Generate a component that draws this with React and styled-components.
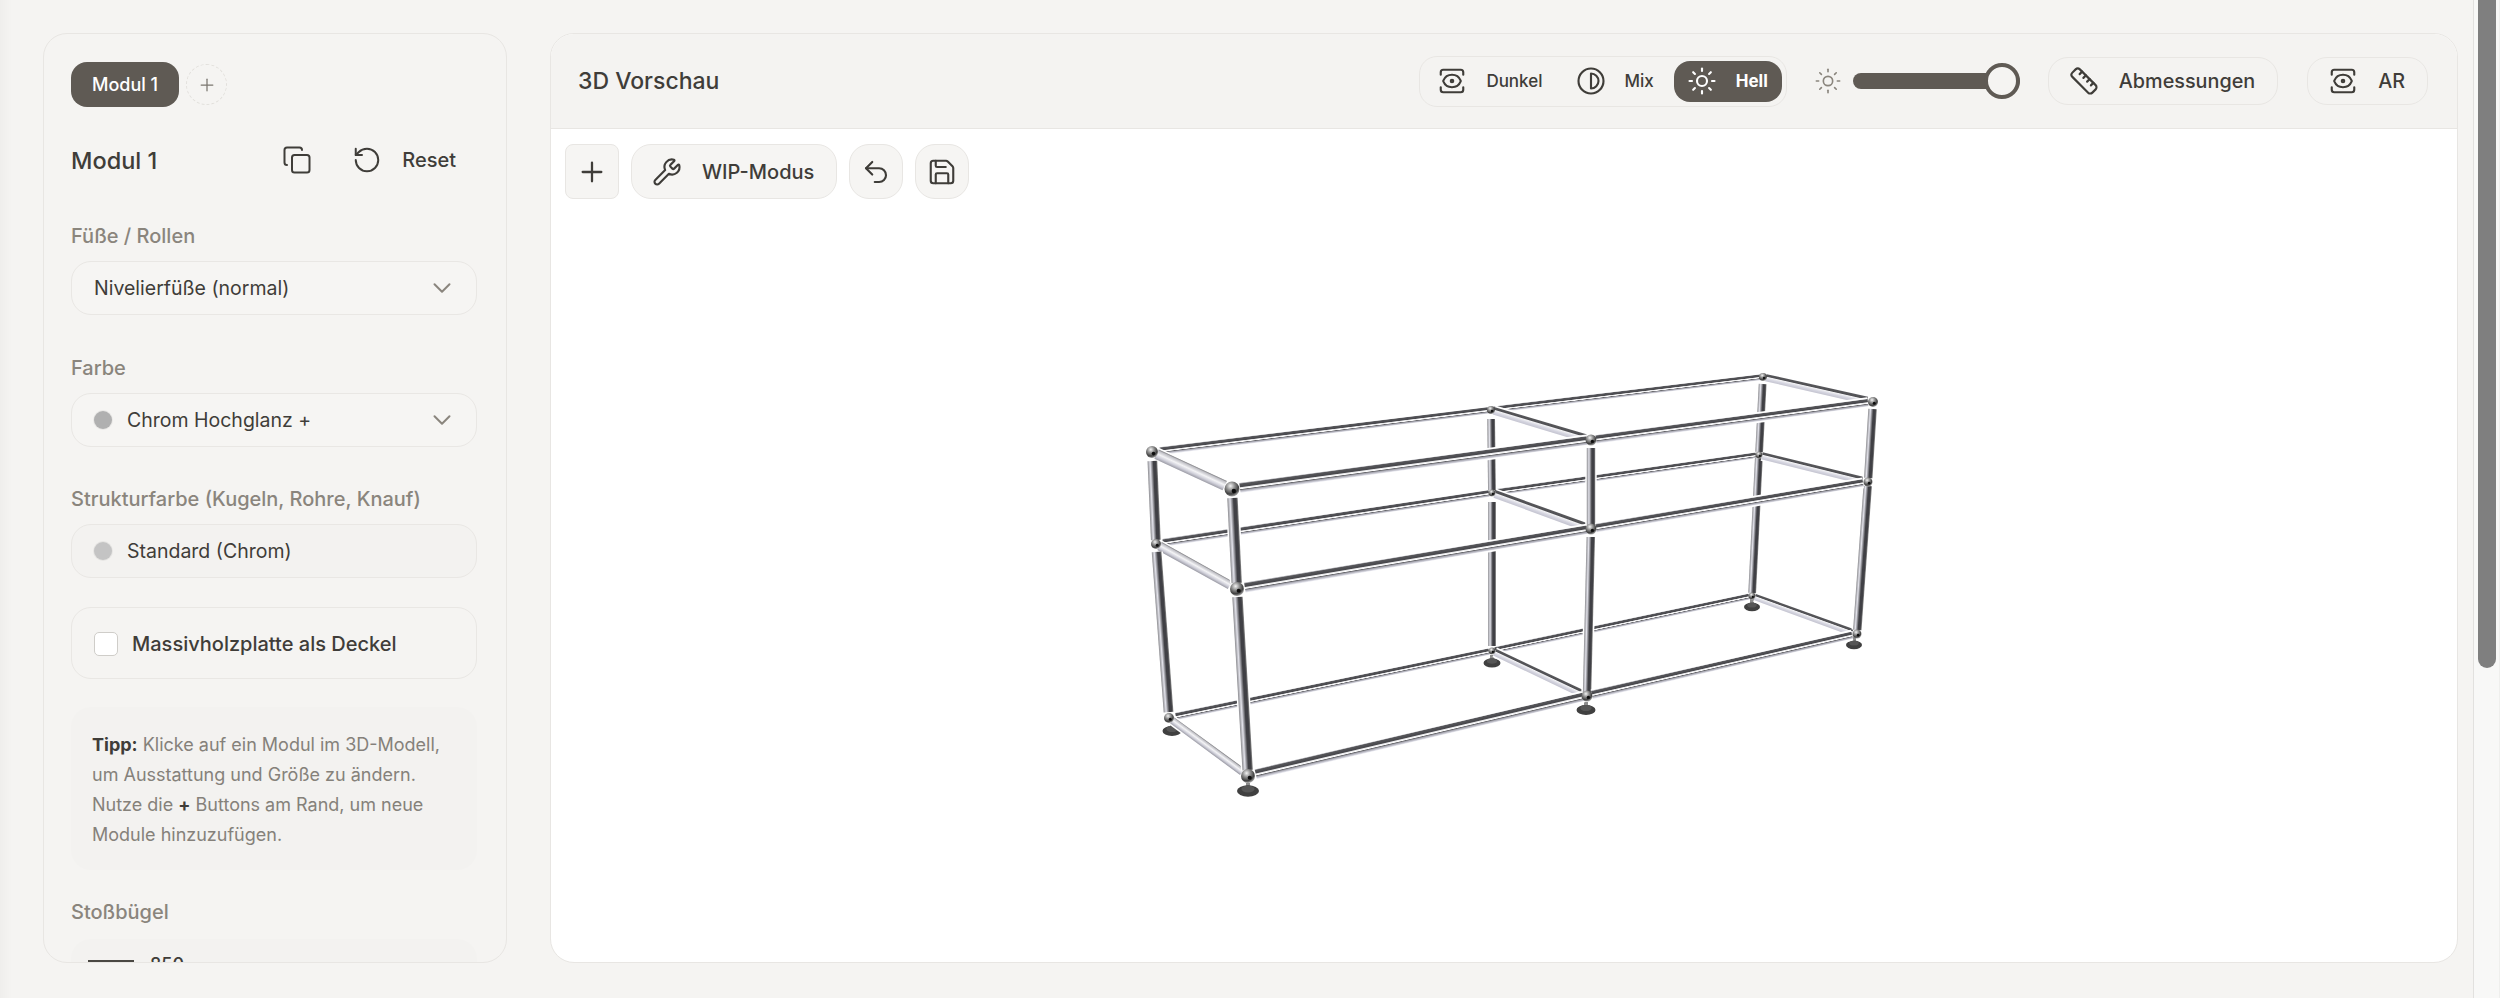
import React from 'react'
import styled, { createGlobalStyle } from 'styled-components'
import { Copy, RotateCcw, Plus, ChevronDown, Wrench, Undo2, Save, Sun, Ruler, View, Contrast } from 'lucide-react'

const GlobalStyle = createGlobalStyle`
  html, body {
    margin: 0;
    height: 100%;
    overflow: hidden;
    background: #f5f4f2;
  }
  body {
    font-family: Inter, "Liberation Sans", Arial, sans-serif;
    color: #3f3d39;
  }
`

const Page = styled.div`
  display: flex;
  height: 998px;
  background: linear-gradient(90deg, #efeeec, #f5f4f2 12px);
`

const Main = styled.main`
  flex: 1;
  display: flex;
  gap: 43px;
  padding: 33px 15px 35px 43px;
  min-width: 0;
`

const ScrollTrack = styled.div`
  width: 27px;
  box-sizing: border-box;
  padding: 0 3px 0 4px;
  background: #f8f8f7;
  border-left: 1px solid #e2e1df;
  border-right: 1px solid #efefed;
`

const ScrollThumb = styled.div`
  height: 668px;
  border-radius: 0 0 10px 10px;
  background: #7f7f7f;
`

const Sidebar = styled.aside`
  width: 464px;
  box-sizing: border-box;
  flex: none;
  padding: 28px 29px 0 27px;
  border: 1px solid #e8e6e3;
  border-radius: 24px;
  overflow: hidden;
  background: #f5f4f2;
`

const Tabs = styled.div`
  display: flex;
  align-items: center;
  gap: 7px;
`

const Tab = styled.div`
  width: 108px;
  height: 45px;
  display: flex;
  align-items: center;
  justify-content: center;
  border-radius: 16px;
  background: #5f5a54;
  color: #fff;
  font-size: 18px;
  font-weight: 500;
`

const AddTab = styled.div`
  width: 41px;
  height: 41px;
  box-sizing: border-box;
  display: flex;
  align-items: center;
  justify-content: center;
  border: 1px dashed #e2e0dc;
  border-radius: 50%;
  color: #7a766f;
`

const TitleRow = styled.div`
  display: flex;
  align-items: center;
  height: 40px;
  margin: 33px 0 44px;
`

const ModuleName = styled.h2`
  flex: 1;
  margin: 0;
  font-size: 23.5px;
  font-weight: 500;
`

const GhostAction = styled.div`
  display: flex;
  align-items: center;
  gap: 20px;
  margin-right: ${props => props.$end || 0}px;
  font-size: 20px;
  font-weight: 500;
`

const Field = styled.section`
  margin-bottom: ${props => props.$after}px;
`

const Label = styled.div`
  height: 24px;
  line-height: 24px;
  margin-bottom: 13px;
  color: #8a857d;
  font-size: 20px;
  font-weight: 500;
  white-space: nowrap;
`

const Select = styled.div`
  height: 54px;
  box-sizing: border-box;
  display: flex;
  align-items: center;
  gap: 15px;
  padding: 0 19px 0 22px;
  border: 1.5px solid #e9e7e4;
  border-radius: 20px;
  background: ${props => (props.$disabled ? '#f3f2f0' : '#f6f5f3')};
  font-size: 19.5px;
`

const SelectText = styled.span`
  flex: 1;
`

const Swatch = styled.span`
  width: 18px;
  height: 18px;
  border-radius: 50%;
  background: ${props => props.$color};
  box-shadow: 0 0 0 1px rgba(0, 0, 0, 0.05);
`

const CheckCard = styled.label`
  height: 72px;
  box-sizing: border-box;
  display: flex;
  align-items: center;
  gap: 14px;
  margin-bottom: 28px;
  padding: 1px 22px 0;
  border: 1.5px solid #e9e7e4;
  border-radius: 20px;
  font-size: 20px;
  font-weight: 500;
`

const CheckBox = styled.span`
  width: 24px;
  height: 24px;
  box-sizing: border-box;
  border: 1.5px solid #cfcdc9;
  border-radius: 5px;
  background: #fff;
`

const TipBox = styled.div`
  height: 163px;
  box-sizing: border-box;
  margin-bottom: 30px;
  padding: 23px 21px;
  border-radius: 20px;
  background: #f3f2f0;
  color: #85817a;
  font-size: 18px;
  line-height: 30px;
  white-space: nowrap;

  strong {
    color: #3f3d39;
    font-weight: 700;
  }
`

const BumperLabel = styled(Label)`
  margin-bottom: 15px;
`

const BumperCard = styled.div`
  height: 60px;
  display: flex;
  align-items: flex-start;
  padding: 15px 17px;
  box-sizing: border-box;
  border-radius: 20px;
  background: #f3f2f0;
`

const BumperBar = styled.span`
  width: 46px;
  height: 2px;
  margin: 6px 16px 0 0;
  background: #4a4843;
`

const BumperSize = styled.span`
  margin-right: 18px;
  font-size: 18px;
  font-weight: 500;
  line-height: 22px;
`

const BumperUnit = styled.span`
  color: #c9c6c1;
  font-size: 16px;
  line-height: 22px;
`

const Preview = styled.section`
  flex: 1;
  min-width: 0;
  display: flex;
  flex-direction: column;
  border: 1px solid #e8e6e3;
  border-radius: 24px;
  overflow: hidden;
  background: #fff;
`

const Header = styled.header`
  flex: none;
  height: 94px;
  display: flex;
  align-items: center;
  padding: 0 29px 0 27px;
  border-bottom: 1.5px solid #e8e6e3;
  background: #f4f3f1;
`

const HeaderTitle = styled.h1`
  flex: 1;
  margin: 0;
  font-size: 23px;
  font-weight: 500;
`

const Segments = styled.div`
  height: 51px;
  box-sizing: border-box;
  display: flex;
  align-items: center;
  gap: 6px;
  padding: 0 4px;
  border: 1px solid #e8e6e3;
  border-radius: 18px;
`

const Segment = styled.div`
  height: 41px;
  display: flex;
  align-items: center;
  gap: 19px;
  padding: 0 14px 0 13px;
  border-radius: 16px;
  background: ${props => (props.$active ? '#5f5a54' : 'transparent')};
  color: ${props => (props.$active ? '#fff' : '#3f3d39')};
  font-size: 17px;
  font-weight: ${props => (props.$active ? 700 : 500)};
`

const SliderWrap = styled.div`
  display: flex;
  align-items: center;
  gap: 11px;
  margin: 0 28px 0 27px;
  color: #8a857d;
`

const SliderTrack = styled.div`
  position: relative;
  width: 167px;
  height: 16px;
  border-radius: 8px;
  background: #5f5a54;
`

const SliderThumb = styled.div`
  position: absolute;
  right: 0;
  top: -10px;
  width: 36px;
  height: 36px;
  box-sizing: border-box;
  border: 4px solid #5f5a54;
  border-radius: 50%;
  background: #f5f4f2;
`

const HeaderButton = styled.div`
  height: 48px;
  box-sizing: border-box;
  display: flex;
  align-items: center;
  gap: 20px;
  margin-left: ${props => props.$gap || 0}px;
  padding: 0 22px 0 20px;
  border: 1px solid #e8e6e3;
  border-radius: 20px;
  font-size: 19.8px;
  font-weight: 500;
`

const Canvas = styled.div`
  position: relative;
  flex: 1;
  min-height: 0;
`

const CanvasDrawing = styled.svg`
  position: absolute;
  inset: 0;
  width: 100%;
  height: 100%;
`

const Toolbar = styled.div`
  position: relative;
  z-index: 1;
  display: flex;
  gap: 12px;
  padding: 15px 14px;
`

const ToolButton = styled.div`
  height: 55px;
  min-width: 54px;
  box-sizing: border-box;
  display: flex;
  align-items: center;
  justify-content: center;
  gap: 20px;
  padding: ${props => (props.$wide ? '0 22px 0 20px' : '0')};
  border: 1.5px solid #e8e6e3;
  border-radius: ${props => (props.$square ? 8 : 20)}px;
  background: #f6f5f3;
  font-size: 20px;
  font-weight: 500;
`

// frame corners in page coordinates, t/m/b = top, middle, bottom level
const P = {
  b0: { t: [1152, 452], m: [1156, 544], b: [1169, 718], foot: [1172, 731, 19] },
  b1: { t: [1491, 410], m: [1492, 493], b: [1492, 651], foot: [1492, 663, 17] },
  b2: { t: [1763, 377], m: [1759, 455], b: [1752, 596], foot: [1752, 607, 16] },
  f0: { t: [1232, 489], m: [1237, 589], b: [1248, 776], foot: [1248, 791, 22] },
  f1: { t: [1591, 440], m: [1591, 529], b: [1587, 696], foot: [1586, 710, 19] },
  f2: { t: [1873, 402], m: [1868, 482], b: [1857, 634], foot: [1854, 645, 16] }
}

const STOPS = {
  rail: [[0, '#a4a4aa'], [0.08, '#56565a'], [0.38, '#48484c'], [0.48, '#e8e8ea'], [0.6, '#fff'], [0.68, '#66666a'], [0.78, '#a4a4ae'], [1, '#e6e6ee']],
  depth: [[0, '#77777a'], [0.14, '#c0c0c6'], [0.45, '#f4f4f6'], [0.72, '#cfcfd9'], [1, '#9a9aa4']],
  depthDark: [[0, '#58585c'], [0.3, '#505054'], [0.42, '#f2f2f4'], [0.7, '#d5d5e0'], [1, '#c4c4d0']],
  post: [[0, '#8c8c90'], [0.26, '#e2e2ea'], [0.44, '#8c8c92'], [0.6, '#404044'], [0.84, '#404044'], [1, '#868686']]
}

const SCALE = 1.3
const tubes = []
const tube = (kind, a, b, w1, w2, trimA = 0, trimB = 0) =>
  tubes.push({ kind, a, b, w1: w1 * SCALE, w2: w2 * SCALE, trimA, trimB })

// back to front: back rails, depth bars, back posts, front posts, front rails
tube('rail', P.b0.t, P.b1.t, 6, 5, 8, 3)
tube('rail', P.b1.t, P.b2.t, 5, 4.5, 3, 3)
tube('rail', P.b0.m, P.b1.m, 6, 5, 7, 3)
tube('rail', P.b1.m, P.b2.m, 5, 4.5, 3, 3)
tube('rail', P.b0.b, P.b1.b, 5.5, 5, 7, 3)
tube('rail', P.b1.b, P.b2.b, 5, 4.5, 3, 3)
tube('post', P.b1.t, P.b1.m, 6, 6, 9, 3)
tube('post', P.b1.m, P.b1.b, 6, 6, 9, 5)
tube('post', P.b2.t, P.b2.m, 6, 6, 7, 3)
tube('post', P.b2.m, P.b2.b, 6, 6, 3, 3)
tube('depth', P.b0.t, P.f0.t, 8, 8, 5, 8)
tube('depth', P.b0.m, P.f0.m, 7, 7, 4, 8)
tube('depth', P.b0.b, P.f0.b, 5.5, 6, 4, 7)
tube('depthDark', P.b1.t, P.f1.t, 6, 6.5, 3, 6)
tube('depthDark', P.b1.m, P.f1.m, 6, 6.5, 3, 6)
tube('depthDark', P.b1.b, P.f1.b, 5.5, 6, 3, 6)
tube('depthDark', P.b2.t, P.f2.t, 5.5, 6, 3, 6)
tube('depthDark', P.b2.m, P.f2.m, 5.5, 6, 3, 6)
tube('depthDark', P.b2.b, P.f2.b, 5, 5.5, 3, 5)
tube('post', P.b0.t, P.b0.m, 7.5, 7.5, 9, 4)
tube('post', P.b0.m, P.b0.b, 7.5, 7.5, 8, 6)
tube('post', P.f0.t, P.f0.m, 8, 8, 9, 6)
tube('post', P.f0.m, P.f0.b, 8, 8, 8, 6)
tube('post', P.f1.t, P.f1.m, 6.5, 6.5, 8, 4)
tube('post', P.f1.m, P.f1.b, 6.5, 6.5, 8, 4)
tube('post', P.f2.t, P.f2.m, 6.5, 6.5, 7, 4)
tube('post', P.f2.m, P.f2.b, 6.5, 6.5, 4, 4)
tube('rail', P.f0.t, P.f1.t, 7.5, 6.5, 8, 4)
tube('rail', P.f1.t, P.f2.t, 6.5, 5.5, 5, 5)
tube('rail', P.f0.m, P.f1.m, 7.5, 6.5, 8, 4)
tube('rail', P.f1.m, P.f2.m, 6.5, 5.5, 5, 5)
tube('rail', P.f0.b, P.f1.b, 7.5, 6.5, 8, 4)
tube('rail', P.f1.b, P.f2.b, 6.5, 5.5, 5, 5)

const geometry = t => {
  const dx = t.b[0] - t.a[0]
  const dy = t.b[1] - t.a[1]
  const len = Math.hypot(dx, dy)
  const ux = dx / len
  const uy = dy / len
  let nx = -uy
  let ny = ux
  // gradient always runs from the upper (or left) side across the tube
  if (t.kind === 'post' ? nx < 0 : ny < 0) {
    nx = -nx
    ny = -ny
  }
  const a = [t.a[0] + ux * t.trimA, t.a[1] + uy * t.trimA]
  const b = [t.b[0] - ux * t.trimB, t.b[1] - uy * t.trimB]
  const w = (t.w1 + t.w2) / 2
  const mx = (a[0] + b[0]) / 2
  const my = (a[1] + b[1]) / 2
  return {
    points: [
      [a[0] - (nx * t.w1) / 2, a[1] - (ny * t.w1) / 2],
      [b[0] - (nx * t.w2) / 2, b[1] - (ny * t.w2) / 2],
      [b[0] + (nx * t.w2) / 2, b[1] + (ny * t.w2) / 2],
      [a[0] + (nx * t.w1) / 2, a[1] + (ny * t.w1) / 2]
    ].map(p => p.join(',')).join(' '),
    x1: mx - (nx * w) / 2,
    y1: my - (ny * w) / 2,
    x2: mx + (nx * w) / 2,
    y2: my + (ny * w) / 2,
    a,
    b,
    w
  }
}

const Ball = ({ at, r }) => (
  <g>
    <circle cx={at[0]} cy={at[1]} r={r} fill="url(#ball)" />
    <circle cx={at[0] + r * 0.25} cy={at[1] + r * 0.25} r={r * 0.3} fill="#111" />
  </g>
)

const Foot = ({ x, y, w }) => (
  <g>
    <rect x={x - 2} y={y - 8} width={4} height={8} fill="#8c8c8c" />
    <ellipse cx={x} cy={y} rx={w / 2} ry={w * 0.26} fill="#3f3f3f" />
    <ellipse cx={x} cy={y - 2} rx={w * 0.3} ry={w * 0.16} fill="#565656" />
  </g>
)

const Shelf = () => (
  <CanvasDrawing viewBox="551 129 1906 833">
    <defs>
      <filter id="soft" x="-5%" y="-5%" width="110%" height="110%">
        <feGaussianBlur stdDeviation="0.4" />
      </filter>
      <radialGradient id="ball" cx="40%" cy="30%" r="72%">
        <stop offset="0" stopColor="#f4f4f4" />
        <stop offset="0.4" stopColor="#8c8c8c" />
        <stop offset="0.75" stopColor="#404040" />
        <stop offset="1" stopColor="#b0b0b0" />
      </radialGradient>
      {tubes.map((t, i) => {
        const g = geometry(t)
        return (
          <linearGradient key={i} id={`tube${i}`} gradientUnits="userSpaceOnUse" x1={g.x1} y1={g.y1} x2={g.x2} y2={g.y2}>
            {STOPS[t.kind].map(([o, c]) => (
              <stop key={o} offset={o} stopColor={c} />
            ))}
          </linearGradient>
        )
      })}
    </defs>
    <g filter="url(#soft)">
      {Object.values(P).map(n => (
        <Foot key={n.foot[0]} x={n.foot[0]} y={n.foot[1]} w={n.foot[2]} />
      ))}
      {tubes.map((t, i) => {
        const g = geometry(t)
        return (
          <g key={i}>
            <line x1={g.a[0]} y1={g.a[1]} x2={g.b[0]} y2={g.b[1]} stroke="#fff" strokeWidth={g.w + 3} />
            <polygon points={g.points} fill={`url(#tube${i})`} />
          </g>
        )
      })}
      <Ball at={P.b0.t} r={6} />
      <Ball at={P.b0.m} r={5} />
      <Ball at={P.b0.b} r={5} />
      <Ball at={P.b1.t} r={4} />
      <Ball at={P.b1.m} r={3.5} />
      <Ball at={P.b1.b} r={3.5} />
      <Ball at={P.b2.t} r={4} />
      <Ball at={P.b2.m} r={3.5} />
      <Ball at={P.b2.b} r={3.5} />
      <Ball at={P.f0.t} r={7.5} />
      <Ball at={P.f0.m} r={7} />
      <Ball at={P.f0.b} r={7} />
      <Ball at={P.f1.t} r={5.5} />
      <Ball at={P.f1.m} r={5.5} />
      <Ball at={P.f1.b} r={5.5} />
      <Ball at={P.f2.t} r={5} />
      <Ball at={P.f2.m} r={4.5} />
      <Ball at={P.f2.b} r={4.5} />
    </g>
  </CanvasDrawing>
)

export default function App() {
  return (
    <Page>
      <GlobalStyle />
      <Main>
        <Sidebar>
          <Tabs>
            <Tab>Modul 1</Tab>
            <AddTab>
              <Plus size={20} strokeWidth={1.5} />
            </AddTab>
          </Tabs>
          <TitleRow>
            <ModuleName>Modul 1</ModuleName>
            <GhostAction $end={40}>
              <Copy size={30} strokeWidth={1.6} />
            </GhostAction>
            <GhostAction $end={21}>
              <RotateCcw size={30} strokeWidth={1.6} />
              Reset
            </GhostAction>
          </TitleRow>
          <Field $after={41}>
            <Label>Füße / Rollen</Label>
            <Select>
              <SelectText>Nivelierfüße (normal)</SelectText>
              <ChevronDown size={30} strokeWidth={1.6} color="#8a857d" />
            </Select>
          </Field>
          <Field $after={40}>
            <Label>Farbe</Label>
            <Select>
              <Swatch $color="#b0b0b0" />
              <SelectText>Chrom Hochglanz +</SelectText>
              <ChevronDown size={30} strokeWidth={1.6} color="#8a857d" />
            </Select>
          </Field>
          <Field $after={29}>
            <Label>Strukturfarbe (Kugeln, Rohre, Knauf)</Label>
            <Select $disabled>
              <Swatch $color="#c4c4c4" />
              <SelectText>Standard (Chrom)</SelectText>
            </Select>
          </Field>
          <CheckCard>
            <CheckBox />
            Massivholzplatte als Deckel
          </CheckCard>
          <TipBox>
            <strong>Tipp:</strong> Klicke auf ein Modul im 3D-Modell,
            <br />
            um Ausstattung und Größe zu ändern.
            <br />
            Nutze die <strong>+</strong> Buttons am Rand, um neue
            <br />
            Module hinzuzufügen.
          </TipBox>
          <BumperLabel>Stoßbügel</BumperLabel>
          <BumperCard>
            <BumperBar />
            <BumperSize>850</BumperSize>
            <BumperUnit>mm</BumperUnit>
          </BumperCard>
        </Sidebar>
        <Preview>
          <Header>
            <HeaderTitle>3D Vorschau</HeaderTitle>
            <Segments>
              <Segment>
                <View size={30} strokeWidth={1.7} />
                Dunkel
              </Segment>
              <Segment>
                <Contrast size={30} strokeWidth={1.7} />
                Mix
              </Segment>
              <Segment $active>
                <Sun size={30} strokeWidth={1.7} />
                Hell
              </Segment>
            </Segments>
            <SliderWrap>
              <Sun size={28} strokeWidth={1.4} />
              <SliderTrack>
                <SliderThumb />
              </SliderTrack>
            </SliderWrap>
            <HeaderButton>
              <Ruler size={30} strokeWidth={1.7} />
              Abmessungen
            </HeaderButton>
            <HeaderButton $gap={29}>
              <View size={30} strokeWidth={1.7} />
              AR
            </HeaderButton>
          </Header>
          <Canvas>
            <Shelf />
            <Toolbar>
              <ToolButton $square>
                <Plus size={32} strokeWidth={1.7} />
              </ToolButton>
              <ToolButton $wide>
                <Wrench size={30} strokeWidth={1.7} />
                WIP-Modus
              </ToolButton>
              <ToolButton>
                <Undo2 size={30} strokeWidth={1.7} />
              </ToolButton>
              <ToolButton>
                <Save size={30} strokeWidth={1.7} />
              </ToolButton>
            </Toolbar>
          </Canvas>
        </Preview>
      </Main>
      <ScrollTrack>
        <ScrollThumb />
      </ScrollTrack>
    </Page>
  )
}
